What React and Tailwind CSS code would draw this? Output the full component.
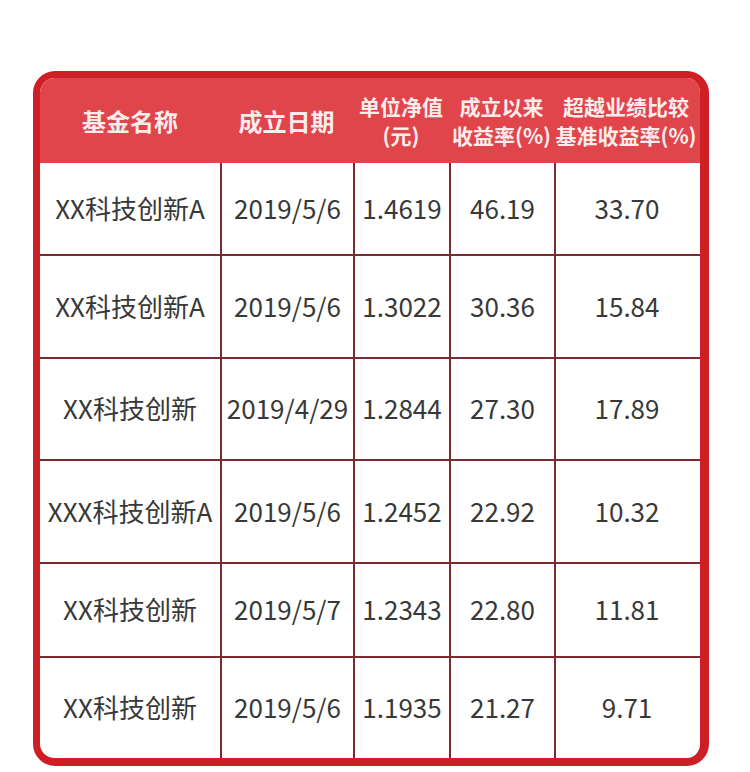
import React from 'react';

const cols = ['w-[180px]', 'w-[133px]', 'w-[96px]', 'w-[105px]', 'w-[144px]'];

const rows = [
  { h: 'h-[91px]', cells: ['XX科技创新A', '2019/5/6', '1.4619', '46.19', '33.70'] },
  { h: 'h-[103px]', cells: ['XX科技创新A', '2019/5/6', '1.3022', '30.36', '15.84'] },
  { h: 'h-[102px]', cells: ['XX科技创新', '2019/4/29', '1.2844', '27.30', '17.89'] },
  { h: 'h-[103px]', cells: ['XXX科技创新A', '2019/5/6', '1.2452', '22.92', '10.32'] },
  { h: 'h-[94px]', cells: ['XX科技创新', '2019/5/7', '1.2343', '22.80', '11.81'] },
  { h: 'h-[102px]', cells: ['XX科技创新', '2019/5/6', '1.1935', '21.27', '9.71'] },
];

const App = () => {
  return (
    <div
      className="w-[750px] h-[772px] bg-white pt-[71px] pl-[33px]"
      style={{ fontFamily: '"Noto Sans CJK SC", "Noto Sans", sans-serif' }}
    >
      <div className="w-[676px] rounded-[22px] border-t-[7px] border-l-[7px] border-r-[9px] border-b-[8px] border-[#cf1f26] overflow-hidden bg-white">
        {/* header */}
        <div className="flex h-[85px] bg-[#e0454c] text-[#fcecec] font-bold">
          <div className={`${cols[0]} flex items-center justify-center text-[24px]`}>基金名称</div>
          <div className={`${cols[1]} flex items-center justify-center text-[24px]`}>成立日期</div>
          <div className={`${cols[2]} flex flex-col items-center justify-center text-[21px] leading-[29px] whitespace-nowrap`}>
            <span>单位净值</span>
            <span>(元)</span>
          </div>
          <div className={`${cols[3]} flex flex-col items-center justify-center text-[21px] leading-[29px] whitespace-nowrap`}>
            <span>成立以来</span>
            <span>收益率(%)</span>
          </div>
          <div className={`${cols[4]} flex flex-col items-center justify-center text-[21px] leading-[29px] whitespace-nowrap`}>
            <span>超越业绩比较</span>
            <span>基准收益率(%)</span>
          </div>
        </div>

        {/* body */}
        {rows.map((row, i) => (
          <div
            key={i}
            className={`flex ${row.h} text-[26px] text-[#383838] ${i > 0 ? 'border-t-2 border-[#7a2b30]' : ''}`}
          >
            {row.cells.map((c, j) => (
              <div
                key={j}
                className={`${cols[j]} flex items-center justify-center whitespace-nowrap pb-[3px] ${j > 0 ? 'border-l-2 border-[#7a2b30]' : ''}`}
              >
                {c}
              </div>
            ))}
          </div>
        ))}
      </div>
    </div>
  );
};

export default App;
